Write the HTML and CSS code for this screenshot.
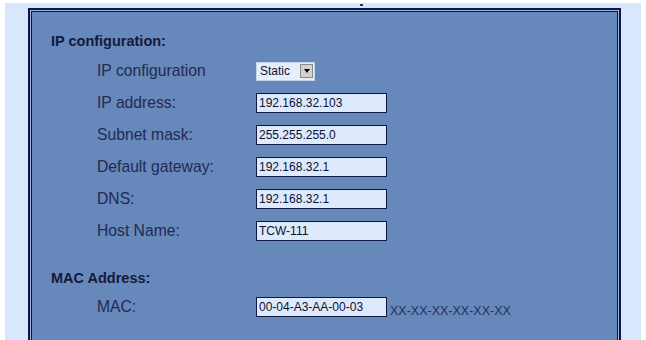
FILE: index.html
```html
<!DOCTYPE html>
<html lang="en">
<head>
  <meta charset="UTF-8" />
  <title>IP configuration</title>
  <link rel="stylesheet" href="styles.css">
</head>
<body>
  <div class="frame">
    <span class="speck"></span>
    <div class="panel">
      <h3 class="section">IP configuration:</h3>
      <div class="rows">
        <div class="row">
          <label>IP configuration</label>
          <div class="select">
            <span class="select-text">Static</span>
            <span class="select-btn"><span class="arrow"></span></span>
          </div>
        </div>
        <div class="row">
          <label for="ip">IP address:</label>
          <input type="text" id="ip" value="192.168.32.103">
        </div>
        <div class="row">
          <label for="mask">Subnet mask:</label>
          <input type="text" id="mask" value="255.255.255.0">
        </div>
        <div class="row">
          <label for="gw">Default gateway:</label>
          <input type="text" id="gw" value="192.168.32.1">
        </div>
        <div class="row">
          <label for="dns">DNS:</label>
          <input type="text" id="dns" value="192.168.32.1">
        </div>
        <div class="row">
          <label for="host">Host Name:</label>
          <input type="text" id="host" value="TCW-111">
        </div>
      </div>

      <h3 class="section mac-title">MAC Address:</h3>
      <div class="rows mac-rows">
        <div class="row">
          <label for="mac">MAC:</label>
          <input type="text" id="mac" value="00-04-A3-AA-00-03">
          <span class="hint">XX-XX-XX-XX-XX-XX</span>
        </div>
      </div>
    </div>
  </div>
</body>
</html>
```

FILE: styles.css
```css
body {
  margin: 0;
  background-color: #ffffff;
  font-family: "Liberation Sans", Arial, sans-serif;
  color: #1c2246;
}
.frame {
  position: relative;
  margin: 3px 0 0 5px;
  width: 636px;
  height: 337px;
  box-sizing: border-box;
  background-color: #d8e7fb;
  padding: 5px 20px 0 23px;
  overflow: hidden;
}
.speck {
  position: absolute;
  left: 355px;
  top: 1px;
  width: 3px;
  height: 2px;
  background-color: #2a3466;
}
.panel {
  width: 593px;
  height: 340px;
  box-sizing: border-box;
  border: 2px solid #0f1646;
  box-shadow: inset 0 0 0 1px #9db2dc, inset 0 0 0 2px #0f1646;
  background-color: #6688bb;
  padding: 22px 0 0 21px;
}
.section {
  margin: 0;
  font-size: 14.5px;
  line-height: 18px;
  font-weight: bold;
  color: #151a3c;
}
.rows {
  margin-top: 5px;
}
.row {
  display: flex;
  align-items: center;
  height: 32px;
}
.row label {
  flex-shrink: 0;
  width: 205px;
  padding-left: 46px;
  box-sizing: border-box;
  font-size: 15.7px;
  color: #232a52;
  white-space: nowrap;
}
.row input {
  flex-shrink: 0;
  width: 131px;
  height: 20px;
  box-sizing: border-box;
  margin: 0;
  padding: 0 2px;
  border: 1px solid #0f1646;
  background-color: #deeafc;
  font-family: "Liberation Sans", Arial, sans-serif;
  font-size: 12px;
  color: #0c1030;
  outline: none;
}
.select {
  display: flex;
  align-items: center;
  width: 59px;
  height: 19px;
  box-sizing: border-box;
  border: 1px solid #c4d4ee;
  background-color: #e4eefc;
  padding: 0 1px 0 3px;
}
.select-text {
  flex: 1;
  font-size: 12px;
  color: #0c1030;
}
.select-btn {
  display: flex;
  align-items: center;
  justify-content: center;
  width: 13px;
  height: 14px;
  background-color: #d6d2ca;
  border: 1px solid #8c8a86;
  box-sizing: border-box;
}
.arrow {
  width: 0;
  height: 0;
  border-left: 3px solid transparent;
  border-right: 3px solid transparent;
  border-top: 4px solid #000000;
}
.mac-title {
  margin-top: 22px;
}
.mac-rows {
  margin-top: 4px;
}
.hint {
  margin: 8px 0 0 3px;
  font-size: 12.5px;
  color: #2a3060;
}
```
